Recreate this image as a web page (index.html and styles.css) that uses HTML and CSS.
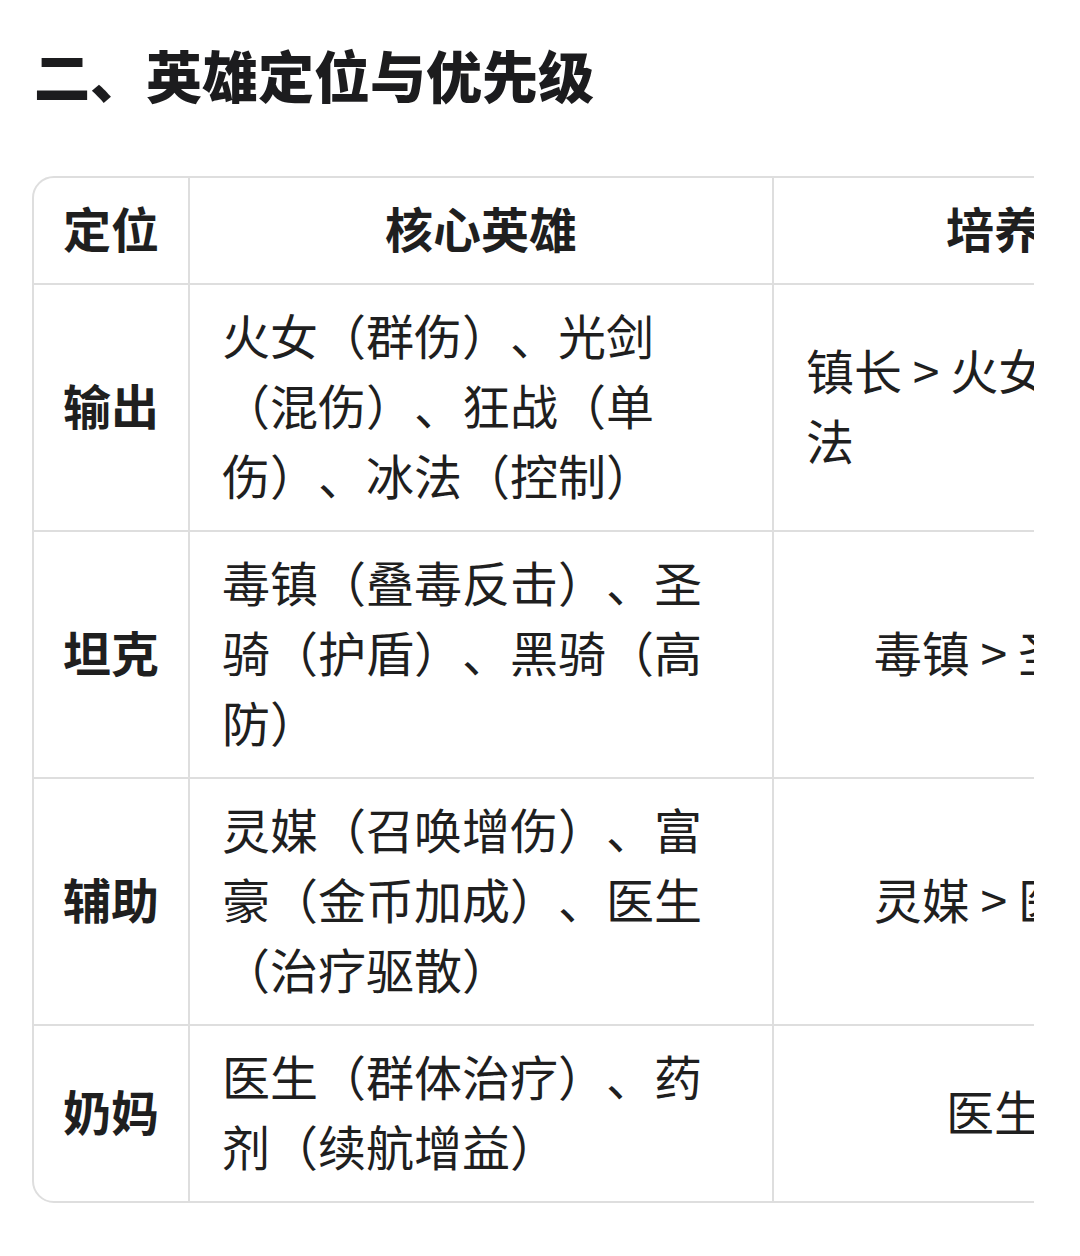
FILE: index.html
```html
<!DOCTYPE html>
<html lang="zh-CN">
<head>
<meta charset="utf-8">
<title>英雄定位与优先级</title>
<link rel="stylesheet" href="styles.css">
</head>
<body>
<h2 class="title">二、英雄定位与优先级</h2>
<div class="table-wrap">
  <table class="hero-table">
    <colgroup>
      <col class="c-role">
      <col class="c-hero">
      <col class="c-prio">
    </colgroup>
    <thead>
      <tr>
        <th><span class="cell">定位</span></th>
        <th><span class="cell">核心英雄</span></th>
        <th class="last"><span class="cell">培养优先级</span></th>
      </tr>
    </thead>
    <tbody>
      <tr>
        <td class="role"><span class="cell">输出</span></td>
        <td><span class="cell">火女（群伤）、光剑（混伤）、狂战（单伤）、冰法（控制）</span></td>
        <td class="last"><span class="cell">镇长 &gt; 火女 &gt; 光剑 &gt; 冰法</span></td>
      </tr>
      <tr>
        <td class="role"><span class="cell">坦克</span></td>
        <td><span class="cell">毒镇（叠毒反击）、圣骑（护盾）、黑骑（高防）</span></td>
        <td class="last"><span class="cell">毒镇 &gt; 圣骑 &gt; 黑骑</span></td>
      </tr>
      <tr>
        <td class="role"><span class="cell">辅助</span></td>
        <td><span class="cell">灵媒（召唤增伤）、富豪（金币加成）、医生（治疗驱散）</span></td>
        <td class="last"><span class="cell">灵媒 &gt; 医生 &gt; 富豪</span></td>
      </tr>
      <tr class="final">
        <td class="role"><span class="cell">奶妈</span></td>
        <td><span class="cell">医生（群体治疗）、药剂（续航增益）</span></td>
        <td class="last"><span class="cell">医生 &gt; 药剂</span></td>
      </tr>
    </tbody>
  </table>
</div>
</body>
</html>
```

FILE: styles.css
```css
html, body {
  margin: 0;
  padding: 0;
  background: #ffffff;
}

body {
  font-family: "Noto Sans CJK SC", "Noto Sans", sans-serif;
  color: #1f1f1f;
  padding: 34px 0 0 32px;
  text-spacing-trim: space-all;
}

.title {
  margin: 0 0 62px 2px;
  font-size: 56px;
  line-height: 80px;
  font-weight: 900;
  color: #1c1c1e;
}

.table-wrap {
  width: 1002px;
  overflow: hidden;
}

.hero-table {
  border-collapse: separate;
  border-spacing: 0;
  border: 2px solid #dedede;
  border-radius: 22px;
  table-layout: fixed;
  width: 1326px;
  font-size: 48px;
  line-height: 70px;
}

.c-role { width: 156px; }
.c-hero { width: 584px; }
.c-prio { width: 584px; }

.hero-table th,
.hero-table td {
  padding: 14px 32px 21px;
  text-align: center;
  vertical-align: middle;
  border-right: 2px solid #dedede;
  border-bottom: 2px solid #dedede;
}

.hero-table th:first-child,
.hero-table td.role {
  padding-left: 28px;
  padding-right: 28px;
}

.hero-table th {
  font-weight: 700;
}

.hero-table td.role {
  font-weight: 700;
}

.hero-table td {
  font-weight: 400;
}

.hero-table .last {
  border-right: none;
}

.hero-table tr.final td {
  border-bottom: none;
}

.cell {
  display: inline-block;
  text-align: left;
}
```
